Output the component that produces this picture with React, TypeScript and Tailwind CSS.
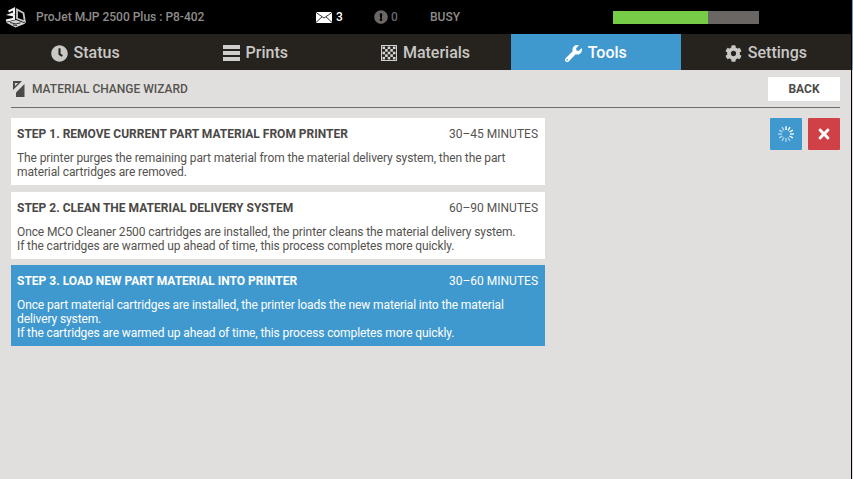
import { FaClock, FaWrench, FaCog, FaTimes, FaExclamationCircle } from "react-icons/fa";

function Logo() {
  return (
    <svg width="21" height="21" viewBox="0 0 21 21" className="shrink-0">
      <path d="M3.5 4.5 L9 1.8 L9 6.2 L5 7.6 L9 8.4 L9 11.8 L1 13.6" fill="none" stroke="#f2f2f2" strokeWidth="2.2" />
      <path d="M12 2.5 L18.5 6 L19.8 14.5 L12 11.5 Z" fill="none" stroke="#c8c8c8" strokeWidth="1.8" />
      <path d="M1 15.5 L10.5 20.5 L20.5 16.5 L11 13 Z" fill="#d4d4d4" />
      <path d="M5 15.5 L11 17 L15.5 15.8 M8 17.8 L12 18.6" stroke="#000" strokeWidth="0.8" fill="none" />
    </svg>
  );
}

function Envelope() {
  return (
    <svg width="16" height="11" viewBox="0 0 16 11">
      <rect width="16" height="11" fill="#fff" />
      <path d="M0 0.5 L8 6 L16 0.5 M0 10.5 L6 4.8 M16 10.5 L10 4.8" stroke="#000" strokeWidth="0.8" fill="none" />
    </svg>
  );
}

function Lines() {
  return (
    <svg width="17" height="16" viewBox="0 0 17 16" fill="#cfcecc">
      <rect y="0" width="17" height="4" />
      <rect y="6" width="17" height="4" />
      <rect y="12" width="17" height="4" />
    </svg>
  );
}

function Checker() {
  return (
    <svg width="16" height="16" viewBox="0 0 16 16">
      <rect x="0.5" y="0.5" width="15" height="15" fill="none" stroke="#d0d0d0" />
      {[0, 1, 2, 3, 4].flatMap((r) =>
        [0, 1, 2, 3, 4].map((c) =>
          (r + c) % 2 === 0 ? <rect key={`${r}${c}`} x={1.5 + c * 2.6} y={1.5 + r * 2.6} width="2.6" height="2.6" fill="#d8d8d8" /> : null
        )
      )}
    </svg>
  );
}

function WizardIcon() {
  return (
    <svg width="12" height="16" viewBox="0 0 12 16">
      <path d="M0 0 H9 L0 9 Z M2 2 V5 L5 2 Z" fill="#4a4a4a" fillRule="evenodd" />
      <path d="M11.5 3 V16 H3 V11.5 Z" fill="#4a4a4a" />
    </svg>
  );
}

function Spinner() {
  return (
    <svg width="18" height="18" viewBox="0 0 16 16">
      {Array.from({ length: 12 }).map((_, i) => (
        <line key={i} x1="8" y1="1" x2="8" y2="4.4" stroke="#fff" strokeWidth="1.2" opacity={i < 5 ? 1 : 0.45 + i * 0.02} transform={`rotate(${i * 30} 8 8)`} />
      ))}
    </svg>
  );
}

const tabs = [
  { label: "Status", icon: <FaClock size={17} /> },
  { label: "Prints", icon: <Lines /> },
  { label: "Materials", icon: <Checker /> },
  { label: "Tools", icon: <FaWrench size={17} />, active: true },
  { label: "Settings", icon: <FaCog size={17} /> },
];

const steps = [
  {
    title: "STEP 1. REMOVE CURRENT PART MATERIAL FROM PRINTER",
    time: "30–45 MINUTES",
    lines: ["The printer purges the remaining part material from the material delivery system, then the part", "material cartridges are removed."],
  },
  {
    title: "STEP 2. CLEAN THE MATERIAL DELIVERY SYSTEM",
    time: "60–90 MINUTES",
    lines: ["Once MCO Cleaner 2500 cartridges are installed, the printer cleans the material delivery system.", "If the cartridges are warmed up ahead of time, this process completes more quickly."],
  },
  {
    title: "STEP 3. LOAD NEW PART MATERIAL INTO PRINTER",
    time: "30–60 MINUTES",
    lines: ["Once part material cartridges are installed, the printer loads the new material into the material", "delivery system.", "If the cartridges are warmed up ahead of time, this process completes more quickly."],
    active: true,
  },
];

export default function App() {
  return (
    <div className="w-[853px] h-[479px] overflow-hidden flex bg-black font-['Roboto',sans-serif]">
      <div className="w-[851px] h-full flex flex-col bg-[#e0dfdd] shrink-0">
        <header className="h-[34px] bg-black flex items-center text-[12px] font-medium text-[#8f8d8b] shrink-0">
          <div className="w-[36px] pl-[5px]"><Logo /></div>
          <span className="w-[280px]">ProJet MJP 2500 Plus : P8-402</span>
          <div className="w-[58px] flex items-center gap-[4px] text-white">
            <Envelope />
            <span>3</span>
          </div>
          <div className="w-[56px] flex items-center gap-[3px] text-[#6a6765]">
            <FaExclamationCircle size={14} />
            <span>0</span>
          </div>
          <span className="w-[183px]">BUSY</span>
          <div className="w-[146px] h-[13px] bg-[#6a6663]">
            <div className="w-[95px] h-full bg-[#76cc47]" />
          </div>
        </header>
        <nav className="h-[36px] bg-[#26231e] flex shrink-0">
          {tabs.map((t) => (
            <div key={t.label} className={`flex-1 flex items-center justify-center gap-[6px] text-[16px] font-medium pt-[2px] ${t.active ? "bg-[#3f99cf] text-white" : "text-[#c9c8c6]"}`}>
              {t.icon}
              <span>{t.label}</span>
            </div>
          ))}
        </nav>
        <main className="flex-1 pl-[11px] pt-[7px] pr-[11px]">
          <div className="h-[24px] flex items-center justify-between border-b border-[#6f6d6b] box-content pb-[6px]">
            <div className="flex items-center gap-[7px] pl-[2px]">
              <WizardIcon />
              <span className="text-[12px] font-medium text-[#55534f]">MATERIAL CHANGE WIZARD</span>
            </div>
            <button className="w-[72px] h-[24px] bg-white text-[12px] font-bold text-[#4d4b49]">BACK</button>
          </div>
          <div className="flex justify-between mt-[10px]">
            <div className="w-[534px] flex flex-col gap-[6.5px]">
              {steps.map((s) => (
                <div key={s.title} className={`pl-[6px] pr-[7px] pt-[8px] pb-[6px] ${s.active ? "bg-[#3f99cf] text-white" : "bg-white text-[#555350]"}`}>
                  <div className="flex justify-between text-[12px] leading-[16px]">
                    <span className={`font-bold ${s.active ? "text-white" : "text-[#4a4846]"}`}>{s.title}</span>
                    <span>{s.time}</span>
                  </div>
                  <div className="mt-[9px] text-[12px] leading-[14px] tracking-[-0.11px]">
                    {s.lines.map((l) => (
                      <div key={l}>{l}</div>
                    ))}
                  </div>
                </div>
              ))}
            </div>
            <div className="flex gap-[6px]">
              <div className="w-[32px] h-[32px] bg-[#3f99cf] rounded-[1px] flex items-center justify-center"><Spinner /></div>
              <div className="w-[32px] h-[32px] bg-[#cf4146] rounded-[1px] flex items-center justify-center text-white"><FaTimes size={16} /></div>
            </div>
          </div>
        </main>
      </div>
      <div className="w-[1px] h-full shrink-0" />
      <div className="w-[1px] h-full shrink-0 flex flex-col bg-[#dfe1e4]">
        <div className="h-[70px] bg-[#7f9bb8]" />
      </div>
    </div>
  );
}
